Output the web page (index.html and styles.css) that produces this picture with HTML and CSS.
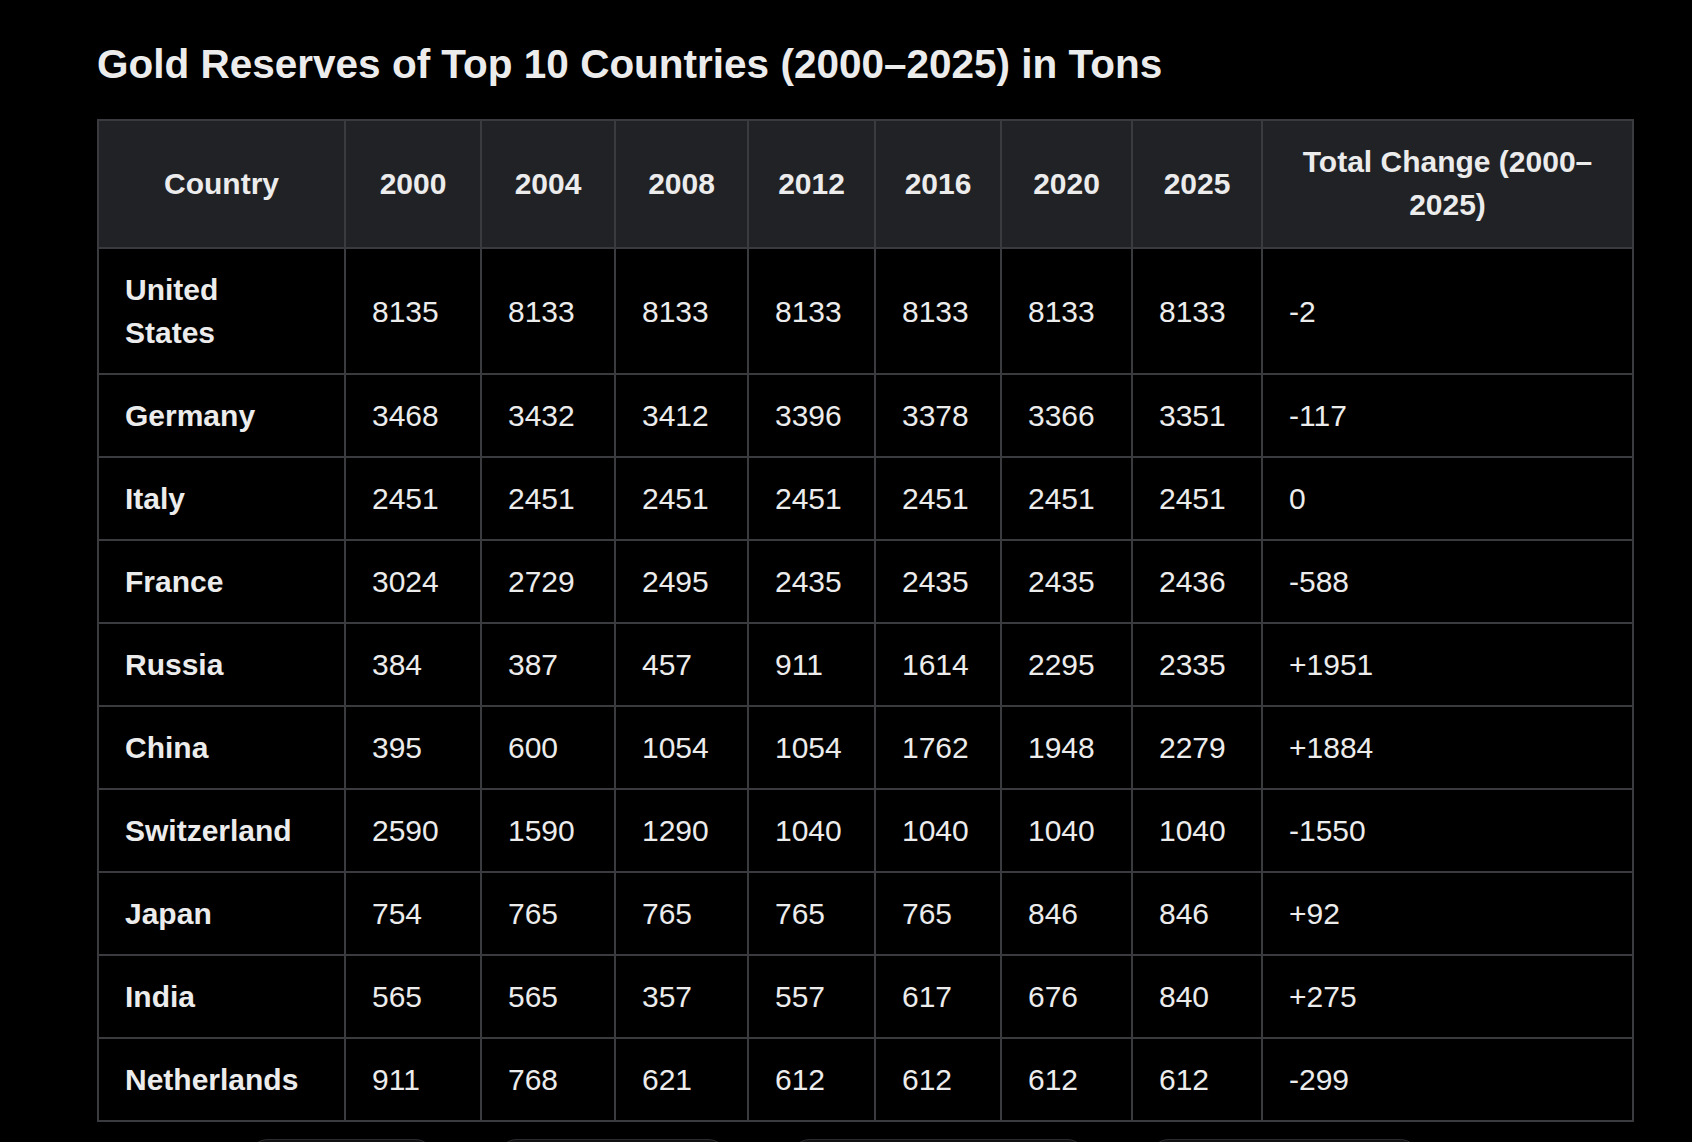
FILE: index.html
```html
<!DOCTYPE html>
<html lang="en">
<head>
<meta charset="utf-8">
<title>Gold Reserves</title>
<link rel="stylesheet" href="styles.css">
</head>
<body>
<main class="page">
  <h2 class="title">Gold Reserves of Top 10 Countries (2000–2025) in Tons</h2>
  <table class="data">
    <colgroup>
      <col class="c-country">
      <col class="c-2000">
      <col class="c-2004">
      <col class="c-2008">
      <col class="c-2012">
      <col class="c-2016">
      <col class="c-2020">
      <col class="c-2025">
      <col class="c-total">
    </colgroup>
    <thead>
      <tr>
        <th>Country</th><th>2000</th><th>2004</th><th>2008</th><th>2012</th><th>2016</th><th>2020</th><th>2025</th><th>Total Change (2000–2025)</th>
      </tr>
    </thead>
    <tbody>
      <tr><td class="name">United States</td><td>8135</td><td>8133</td><td>8133</td><td>8133</td><td>8133</td><td>8133</td><td>8133</td><td>-2</td></tr>
      <tr><td class="name">Germany</td><td>3468</td><td>3432</td><td>3412</td><td>3396</td><td>3378</td><td>3366</td><td>3351</td><td>-117</td></tr>
      <tr><td class="name">Italy</td><td>2451</td><td>2451</td><td>2451</td><td>2451</td><td>2451</td><td>2451</td><td>2451</td><td>0</td></tr>
      <tr><td class="name">France</td><td>3024</td><td>2729</td><td>2495</td><td>2435</td><td>2435</td><td>2435</td><td>2436</td><td>-588</td></tr>
      <tr><td class="name">Russia</td><td>384</td><td>387</td><td>457</td><td>911</td><td>1614</td><td>2295</td><td>2335</td><td>+1951</td></tr>
      <tr><td class="name">China</td><td>395</td><td>600</td><td>1054</td><td>1054</td><td>1762</td><td>1948</td><td>2279</td><td>+1884</td></tr>
      <tr><td class="name">Switzerland</td><td>2590</td><td>1590</td><td>1290</td><td>1040</td><td>1040</td><td>1040</td><td>1040</td><td>-1550</td></tr>
      <tr><td class="name">Japan</td><td>754</td><td>765</td><td>765</td><td>765</td><td>765</td><td>846</td><td>846</td><td>+92</td></tr>
      <tr><td class="name">India</td><td>565</td><td>565</td><td>357</td><td>557</td><td>617</td><td>676</td><td>840</td><td>+275</td></tr>
      <tr><td class="name">Netherlands</td><td>911</td><td>768</td><td>621</td><td>612</td><td>612</td><td>612</td><td>612</td><td>-299</td></tr>
    </tbody>
  </table>
  <div class="chips">
    <span class="chip chip-a"></span>
    <span class="chip chip-b"></span>
    <span class="chip chip-c"></span>
    <span class="chip chip-d"></span>
  </div>
</main>
</body>
</html>
```

FILE: styles.css
```css
html, body {
  margin: 0;
  padding: 0;
  background: #000;
  height: 100%;
  overflow: hidden;
}

.page {
  height: 1142px;
  overflow: hidden;
  padding: 0 0 0 97px;
  box-sizing: border-box;
  font-family: "Liberation Sans", Arial, sans-serif;
  color: #ececec;
}

.title {
  margin: 0;
  padding-top: 40px;
  font-size: 40.5px;
  line-height: 48px;
  font-weight: 700;
  color: #ececec;
  height: 119px;
  box-sizing: border-box;
}

.data {
  width: 1535px;
  table-layout: fixed;
  border-collapse: collapse;
  border: 2px solid #3a3b3f;
  font-size: 30px;
  line-height: 43px;
}

.c-country { width: 247px; }
.c-2000 { width: 136px; }
.c-2004 { width: 134px; }
.c-2008 { width: 133px; }
.c-2012 { width: 127px; }
.c-2016 { width: 126px; }
.c-2020 { width: 131px; }
.c-2025 { width: 130px; }
.c-total { width: 371px; }

.data th,
.data td {
  border: 2px solid #3a3b3f;
  padding: 19px 26px;
  vertical-align: middle;
}

.data th {
  background: #212226;
  font-weight: 700;
  text-align: center;
  color: #ececec;
  padding: 19px 28px 21px;
}

.data td {
  text-align: left;
  font-weight: 400;
  color: #ececec;
}

.data td.name {
  font-weight: 700;
  padding-right: 32px;
}

.chips {
  display: flex;
  gap: 62px;
  padding-left: 151px;
  margin-top: 17px;
}

.chip {
  display: block;
  height: 40px;
  border-radius: 20px;
  background: #111113;
  border: 1px solid #2a2b2f;
}

.chip-a { width: 185px; }
.chip-b { width: 229px; }
.chip-c { width: 295px; }
.chip-d { width: 269px; }
```
